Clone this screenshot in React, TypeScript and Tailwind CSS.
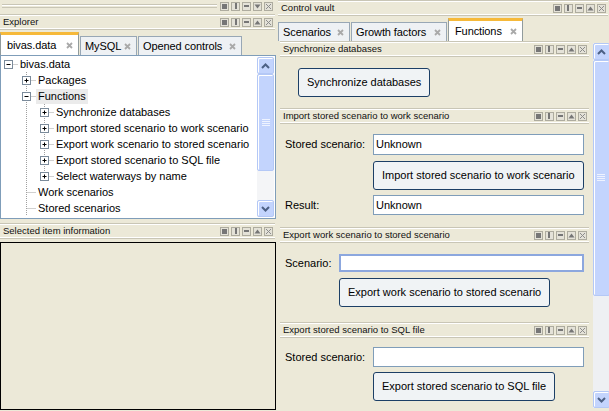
import React from "react";
import clsx from "clsx";

// small pane header buttons: pin, split, minimize, collapse, close
const paneBtn =
  "w-[9px] h-[9px] border border-[#aeac9f] bg-[#e4e2d8] flex items-center justify-center";

function PaneButtons({ arrow }: { arrow: "up" | "down" }) {
  return (
    <div className="flex gap-[2px] shrink-0">
      <span className={paneBtn}>
        <span className="w-[5px] h-[5px] bg-[#767676]" />
      </span>
      <span className={paneBtn}>
        <span className="w-[2px] h-[6px] bg-[#767676]" />
      </span>
      <span className={paneBtn}>
        <span className="w-[5px] h-[2px] bg-[#767676]" />
      </span>
      <span className={paneBtn}>
        <svg width="7" height="7" viewBox="0 0 7 7">
          {arrow === "up" ? (
            <path d="M0.5 5.5 L3.5 1.5 L6.5 5.5 Z" fill="#767676" />
          ) : (
            <path d="M0.5 1.5 L3.5 5.5 L6.5 1.5 Z" fill="#767676" />
          )}
        </svg>
      </span>
      <span className={paneBtn}>
        <svg width="7" height="7" viewBox="0 0 7 7">
          <path d="M1 1 L6 6 M6 1 L1 6" stroke="#8c8c8c" strokeWidth="1" />
        </svg>
      </span>
    </div>
  );
}

type TitleBarProps = { title: string; arrow?: "up" | "down"; className?: string };
function TitleBar({ title, arrow = "up", className }: TitleBarProps) {
  return (
    <div
      className={clsx(
        "flex items-center h-[16px] border-y border-[#c9c6b6] shadow-[inset_0_1px_0_#ffffff,inset_0_-1px_0_#ffffff]",
        className
      )}
    >
      <span className="flex-1 truncate pl-[3px] text-[9.5px] leading-none text-[#111]">{title}</span>
      <PaneButtons arrow={arrow} />
      <span className="w-[2px] shrink-0" />
    </div>
  );
}

function CloseX() {
  return (
    <svg width="7" height="7" viewBox="0 0 7 7" className="shrink-0">
      <path d="M1 1 L6 6 M6 1 L1 6" stroke="#a9a9a9" strokeWidth="1.8" />
    </svg>
  );
}

type TabProps = { label: string; active?: boolean; w: string };
function Tab({ label, active, w }: TabProps) {
  return (
    <div
      className={clsx(
        "flex items-center justify-between border border-b-0 text-[11px] text-black",
        w,
        active
          ? "h-[23px] pl-[6px] pr-[5px] bg-white border-[#919b9c] border-t-[3px] border-t-[#f6b93a]"
          : "h-[19px] pl-[4px] pr-[5px] bg-[#eef1f4] border-[#98a7b5]"
      )}
    >
      <span className="tracking-[-0.1px]">{label}</span>
      <CloseX />
    </div>
  );
}

function ArrowBtn({ dir }: { dir: "up" | "down" }) {
  return (
    <div className="h-[17px] w-[17px] shrink-0 rounded-[2px] border border-[#b4c8f6] bg-[#c3d4fd] shadow-[inset_1px_1px_0_#ffffff] flex items-center justify-center">
      <svg width="9" height="6" viewBox="0 0 9 6">
        {dir === "up" ? (
          <path d="M1 5 L4.5 1.5 L8 5" stroke="#4d6185" strokeWidth="2" fill="none" />
        ) : (
          <path d="M1 1 L4.5 4.5 L8 1" stroke="#4d6185" strokeWidth="2" fill="none" />
        )}
      </svg>
    </div>
  );
}

function ScrollBar({ thumb, className }: { thumb: string; className?: string }) {
  return (
    <div className={clsx("w-[17px] shrink-0 flex flex-col bg-[#eef0f3]", className)}>
      <ArrowBtn dir="up" />
      <div
        className={clsx(
          "shrink-0 rounded-[2px] border border-[#b4c8f6] bg-[#c3d4fd] shadow-[inset_1px_1px_0_#ffffff] flex items-center justify-center",
          thumb
        )}
      >
        <svg width="8" height="8" viewBox="0 0 8 8">
          <path d="M0 0.5 H8 M0 2.5 H8 M0 4.5 H8 M0 6.5 H8" stroke="#eef3ff" strokeWidth="1" />
        </svg>
      </div>
      <div className="flex-1" />
      <ArrowBtn dir="down" />
    </div>
  );
}

// tree
type Node = {
  label: string;
  guides: boolean[];
  root?: boolean;
  last?: boolean;
  box?: "+" | "-";
  sel?: boolean;
};

const treeRows: Node[] = [
  { label: "bivas.data", guides: [], root: true, box: "-" },
  { label: "Packages", guides: [false], box: "+" },
  { label: "Functions", guides: [false], box: "-", sel: true },
  { label: "Synchronize databases", guides: [false, true], box: "+" },
  { label: "Import stored scenario to work scenario", guides: [false, true], box: "+" },
  { label: "Export work scenario to stored scenario", guides: [false, true], box: "+" },
  { label: "Export stored scenario to SQL file", guides: [false, true], box: "+" },
  { label: "Select waterways by name", guides: [false, true], box: "+", last: true },
  { label: "Work scenarios", guides: [false] },
  { label: "Stored scenarios", guides: [false] },
];

function Guide({ on }: { on: boolean }) {
  return (
    <svg width="18" height="16" className="shrink-0">
      {on && <path d="M6.5 0 V16" stroke="#a0a0a0" strokeDasharray="1 1" />}
    </svg>
  );
}

function Connector({ n }: { n: Node }) {
  return (
    <svg width="16" height="16" className="shrink-0">
      {!n.root && (
        <path d={n.last ? "M6.5 0 V8.5" : "M6.5 0 V16"} stroke="#a0a0a0" strokeDasharray="1 1" />
      )}
      <path d="M6.5 8.5 H16" stroke="#a0a0a0" strokeDasharray="1 1" />
      {n.box && (
        <>
          <rect x="2.5" y="4.5" width="8" height="8" fill="#ffffff" stroke="#7b8b9b" />
          <path d="M4.5 8.5 H8.5" stroke="#000" />
          {n.box === "+" && <path d="M6.5 6.5 V10.5" stroke="#000" />}
        </>
      )}
    </svg>
  );
}

function Tree() {
  return (
    <div className="flex-1 min-w-0 overflow-hidden pl-[1px]">
      {treeRows.map((n) => (
        <div key={n.label} className="flex items-center h-[16px]">
          {n.guides.map((g, i) => (
            <Guide key={i} on={g} />
          ))}
          <Connector n={n} />
          <span
            className={clsx(
              "px-[2px] text-[11px] leading-[15px] whitespace-nowrap text-black",
              n.sel && "bg-[#ebebeb]"
            )}
          >
            {n.label}
          </span>
        </div>
      ))}
    </div>
  );
}

function Field({ value, focus }: { value?: string; focus?: boolean }) {
  return (
    <div
      className={clsx(
        "flex-1 h-full bg-white flex items-center pl-[2px] text-[11px] text-black",
        focus ? "border-2 border-[#8ca7de]" : "border border-[#7f9db9]"
      )}
    >
      {value}
    </div>
  );
}

function Button({ children }: { children: React.ReactNode }) {
  return (
    <div className="inline-flex items-center h-[29px] px-[8px] rounded-[3px] border border-[#1c3f66] bg-[#f0f3f5] text-[11px] text-black whitespace-nowrap">
      {children}
    </div>
  );
}

export default function App() {
  return (
    <div className="w-[609px] h-[411px] overflow-hidden bg-[#ece9d8] flex font-['Liberation_Sans',Arial,sans-serif]">
      {/* left column */}
      <div className="w-[276px] shrink-0 flex flex-col">
        <div className="h-[12px] flex items-center pr-[3px]">
          <div className="flex-1 ml-[2px] mr-[3px] h-[4px] border-y border-[#c9c6b6] shadow-[inset_0_1px_0_#ffffff]" />
          <PaneButtons arrow="down" />
        </div>
        <TitleBar title="Explorer" className="mt-[2px] mr-[1px]" />
        <div className="mt-[2px] flex items-end gap-[1px]">
          <Tab label="bivas.data" active w="w-[79px]" />
          <Tab label="MySQL" w="w-[57px]" />
          <Tab label="Opened controls" w="w-[104px]" />
        </div>
        <div className="h-[164px] border border-[#7f9db9] bg-white flex">
          <Tree />
          <ScrollBar thumb="h-[97px]" className="m-[1px] bg-[#f4f5f7]" />
        </div>
        <TitleBar title="Selected item information" className="mt-[4px] mr-[1px]" />
        <div className="mt-[3px] h-[168px] border border-black" />
      </div>

      {/* right column */}
      <div className="ml-[2px] flex-1 flex flex-col">
        <TitleBar title="Control vault" className="mr-[4px]" />
        <div className="mt-[2px] flex items-end gap-[1px]">
          <Tab label="Scenarios" w="w-[72px]" />
          <Tab label="Growth factors" w="w-[96px]" />
          <Tab label="Functions" active w="w-[75px]" />
        </div>
        <div className="flex-1 flex min-h-0">
          <div className="flex-1 min-w-0 flex flex-col text-[11px] text-black">
            <TitleBar title="Synchronize databases" className="mx-[2px]" />
            <div className="h-[51px] pt-[11px] pl-[20px]">
              <Button>Synchronize databases</Button>
            </div>

            <TitleBar title="Import stored scenario to work scenario" className="mx-[2px]" />
            <div className="h-[103px] pt-[10px] pl-[7px] pr-[7px] flex flex-col">
              <div className="flex items-center h-[21px]">
                <span className="w-[88px] shrink-0">Stored scenario:</span>
                <Field value="Unknown" />
              </div>
              <div className="mt-[6px] pl-[88px]">
                <Button>Import stored scenario to work scenario</Button>
              </div>
              <div className="mt-[5px] flex items-center h-[20px]">
                <span className="w-[88px] shrink-0">Result:</span>
                <Field value="Unknown" />
              </div>
            </div>

            <TitleBar title="Export work scenario to stored scenario" className="mx-[2px]" />
            <div className="h-[79px] pt-[11px] pl-[7px] pr-[7px] flex flex-col">
              <div className="flex items-center h-[18px]">
                <span className="w-[54px] shrink-0">Scenario:</span>
                <Field focus />
              </div>
              <div className="mt-[6px] pl-[54px]">
                <Button>Export work scenario to stored scenario</Button>
              </div>
            </div>

            <TitleBar title="Export stored scenario to SQL file" className="mx-[2px]" />
            <div className="pt-[9px] pl-[7px] pr-[7px] flex flex-col">
              <div className="flex items-center h-[20px]">
                <span className="w-[88px] shrink-0">Stored scenario:</span>
                <Field />
              </div>
              <div className="mt-[5px] pl-[88px]">
                <Button>Export stored scenario to SQL file</Button>
              </div>
            </div>
          </div>
          <ScrollBar thumb="h-[236px]" className="mt-[2px] mb-[3px] ml-[2px] mr-[2px]" />
        </div>
      </div>
    </div>
  );
}
